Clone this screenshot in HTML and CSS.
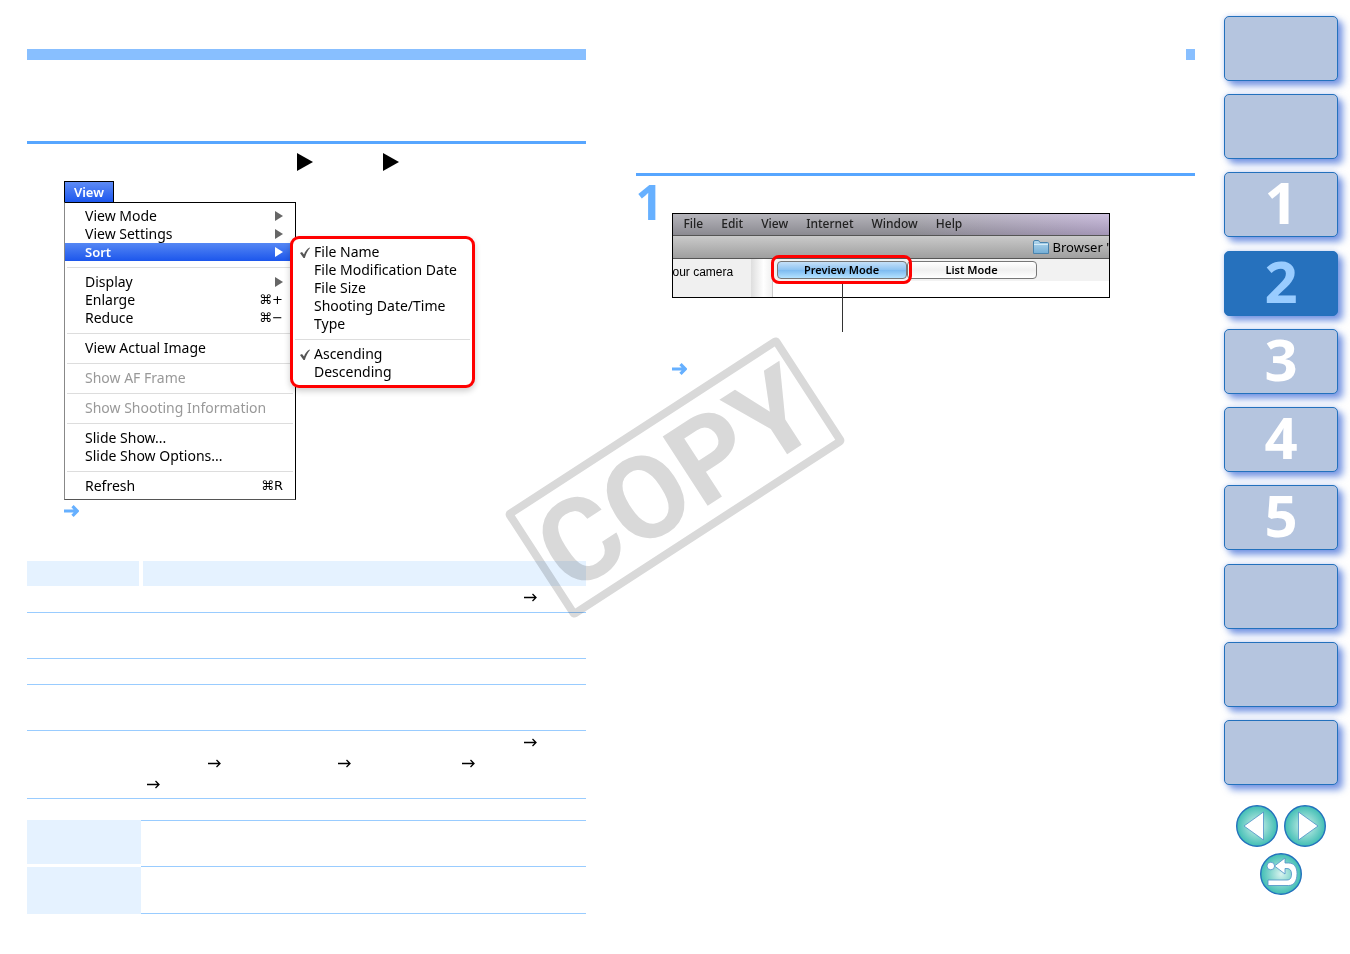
FILE: index.html
```
<!DOCTYPE html>
<html lang="en">
<head>
    <meta charset="UTF-8">
    <meta name="viewport" content="width=device-width, initial-scale=1.0">
    <title>Sorting Images</title>
    <link rel="stylesheet" href="styles.css">
</head>
<body>
    <!-- Shared shapes -->
    <svg class="defs" width="0" height="0" aria-hidden="true">
        <defs>
            <radialGradient id="teal" cx="50%" cy="50%" r="50%">
                <stop offset="0" stop-color="#d9f3ef"/>
                <stop offset="0.5" stop-color="#8ad8d0"/>
                <stop offset="1" stop-color="#3fbdb4"/>
            </radialGradient>
            <linearGradient id="folder" x1="0" y1="0" x2="0" y2="1">
                <stop offset="0" stop-color="#b4d8ee"/>
                <stop offset="1" stop-color="#74aed6"/>
            </linearGradient>
        </defs>
        <symbol id="ref" viewBox="0 0 13 9">
            <path d="M0 4.5H12M8.5 1L12 4.5L8.5 8" fill="none" stroke="#000" stroke-width="1.3"/>
        </symbol>
        <symbol id="note" viewBox="0 0 15 12">
            <path d="M0 6H13M8.5 1.2L13.2 6L8.5 10.8" fill="none" stroke="#66b0ff" stroke-width="3.2"/>
        </symbol>
        <symbol id="step" viewBox="0 0 16 18">
            <path d="M0 0L16 9L0 18Z"/>
        </symbol>
        <symbol id="sub" viewBox="0 0 8 10">
            <path d="M0 0L8 5L0 10Z" fill="currentColor"/>
        </symbol>
        <symbol id="check" viewBox="0 0 10 11">
            <path d="M0 6L2 5L4 7.5C5 4.5 7 2 9.5 0.5L10 1C7.5 4 6 7 4.8 11H3.5Z" fill="#555"/>
        </symbol>
    </svg>

    <div class="page">
        <main class="column">
            <div class="bar"></div>
            <div class="heading"></div>
            <div class="path">
                <svg><use href="#step"/></svg>
                <svg><use href="#step"/></svg>
            </div>

            <div class="menu-figure">
                <button type="button" class="menu-title">View</button>
                <ul class="menu">
                    <li><button type="button">View Mode <svg class="sub"><use href="#sub"/></svg></button></li>
                    <li><button type="button">View Settings <svg class="sub"><use href="#sub"/></svg></button></li>
                    <li class="open">
                        <button type="button">Sort <svg class="sub"><use href="#sub"/></svg></button>
                        <ul class="submenu">
                            <li><button type="button"><svg class="check"><use href="#check"/></svg>File Name</button></li>
                            <li><button type="button">File Modification Date</button></li>
                            <li><button type="button">File Size</button></li>
                            <li><button type="button">Shooting Date/Time</button></li>
                            <li><button type="button">Type</button></li>
                            <li class="separator"></li>
                            <li><button type="button"><svg class="check"><use href="#check"/></svg>Ascending</button></li>
                            <li><button type="button">Descending</button></li>
                        </ul>
                    </li>
                    <li class="separator"></li>
                    <li><button type="button">Display <svg class="sub"><use href="#sub"/></svg></button></li>
                    <li><button type="button">Enlarge <kbd>⌘+</kbd></button></li>
                    <li><button type="button">Reduce <kbd>⌘−</kbd></button></li>
                    <li class="separator"></li>
                    <li><button type="button">View Actual Image</button></li>
                    <li class="separator"></li>
                    <li><button type="button" disabled>Show AF Frame</button></li>
                    <li class="separator"></li>
                    <li><button type="button" disabled>Show Shooting Information</button></li>
                    <li class="separator"></li>
                    <li><button type="button">Slide Show...</button></li>
                    <li><button type="button">Slide Show Options...</button></li>
                    <li class="separator"></li>
                    <li><button type="button">Refresh <kbd>⌘R</kbd></button></li>
                </ul>
                <svg class="note"><use href="#note"/></svg>
            </div>

            <table class="items">
                <thead>
                    <tr><th></th><th></th></tr>
                </thead>
                <tbody>
                    <tr><td></td><td><div class="refs end"><svg><use href="#ref"/></svg></div></td></tr>
                    <tr class="tall"><td></td><td></td></tr>
                    <tr><td></td><td></td></tr>
                    <tr class="tall"><td></td><td></td></tr>
                    <tr>
                        <td></td>
                        <td>
                            <div class="refs end"><svg><use href="#ref"/></svg></div>
                            <div class="refs middle">
                                <svg><use href="#ref"/></svg>
                                <svg><use href="#ref"/></svg>
                                <svg><use href="#ref"/></svg>
                            </div>
                            <div class="refs"><svg><use href="#ref"/></svg></div>
                        </td>
                    </tr>
                </tbody>
            </table>

            <table class="order">
                <tbody>
                    <tr><th></th><td></td></tr>
                    <tr><th></th><td></td></tr>
                </tbody>
            </table>
        </main>

        <section class="column">
            <div class="bar short"></div>
            <div class="heading large"></div>
            <div class="procedure">
                <span class="number">1</span>
                <div class="step-body">
                    <div class="window">
                        <div class="menubar">
                            <span>File</span><span>Edit</span><span>View</span><span>Internet</span><span>Window</span><span>Help</span>
                        </div>
                        <div class="titlebar">
                            <svg viewBox="0 0 16 14" width="16" height="14">
                                <path d="M0.5 2Q0.5 0.5 2 0.5H5.5L7 2.5H14.5Q15.5 2.5 15.5 3.5V13.5H0.5Z" fill="url(#folder)" stroke="#4a83ad"/>
                                <path d="M1 4.5H15" stroke="#d6ebf7"/>
                            </svg>
                            <span>Browser '</span>
                        </div>
                        <div class="content">
                            <div class="camera">our camera</div>
                            <div class="scroll"></div>
                            <div class="viewer">
                                <div class="modes">
                                    <div class="mode-wrap marked"><button type="button" class="mode active">Preview Mode</button></div>
                                    <div class="mode-wrap"><button type="button" class="mode">List Mode</button></div>
                                </div>
                            </div>
                        </div>
                    </div>
                    <div class="callout"></div>
                    <svg class="note"><use href="#note"/></svg>
                </div>
            </div>
        </section>

        <nav class="side">
            <div class="tabs">
                <a href="#" aria-label="Introduction"></a>
                <a href="#" aria-label="Contents"></a>
                <a href="#">1</a>
                <a href="#" class="current">2</a>
                <a href="#">3</a>
                <a href="#">4</a>
                <a href="#">5</a>
                <a href="#" aria-label="Preferences"></a>
                <a href="#" aria-label="Reference"></a>
                <a href="#" aria-label="Index"></a>
            </div>
            <div class="pager">
                <a href="#" aria-label="Previous page">
                    <svg viewBox="0 0 42 42">
                        <circle cx="21" cy="21" r="20.3" fill="url(#teal)" stroke="#2371bd" stroke-width="1.4"/>
                        <path d="M8 21L27.5 7V35Z" fill="#fff" stroke="#4c8fc8" stroke-width="0.8"/>
                    </svg>
                </a>
                <a href="#" aria-label="Next page">
                    <svg viewBox="0 0 42 42">
                        <circle cx="21" cy="21" r="20.3" fill="url(#teal)" stroke="#2371bd" stroke-width="1.4"/>
                        <path d="M34 21L14.5 7V35Z" fill="#fff" stroke="#4c8fc8" stroke-width="0.8"/>
                    </svg>
                </a>
                <a href="#" aria-label="Back">
                    <svg viewBox="0 0 42 42">
                        <circle cx="21" cy="21" r="20.3" fill="url(#teal)" stroke="#2371bd" stroke-width="1.4"/>
                        <path d="M14.5 13L25 5V10H28.5C34 10 37 14 37 20.5C37 28 34 32.5 28.5 32.5H8V27H27C30.5 27 31.5 24.5 31.5 21C31.5 17.5 30 15.5 27 15.5H25V21Z" fill="#fff" stroke="#4c8fc8" stroke-width="0.8"/>
                        <circle cx="10.8" cy="13" r="3.8" fill="#fff" stroke="#4c8fc8" stroke-width="0.8"/>
                    </svg>
                </a>
            </div>
        </nav>

        <div class="watermark">COPY</div>
    </div>
</body>
</html>
```
FILE: styles.css
```
* {
    box-sizing: border-box;
}
body {
    margin: 0;
    background: #fff;
    color: #000;
    font-family: "Noto Sans", "Open Sans", sans-serif;
    font-size: 14px;
}
button {
    font: inherit;
    color: inherit;
    border: none;
    background: none;
    padding: 0;
    cursor: pointer;
}
ul {
    list-style: none;
    margin: 0;
    padding: 0;
}
svg {
    display: block;
    flex-shrink: 0;
}
.defs {
    position: absolute;
}
.page {
    position: relative;
    display: grid;
    grid-template-columns: 1fr 1fr 114px;
    padding: 0 12px 40px 27px;
    overflow: hidden;
}
.column {
    padding-top: 49px;
    margin-right: 29px;
    min-width: 0;
}
main.column {
    margin-right: 40px;
}
.column + .column {
    margin-left: 10px;
}
.bar {
    height: 11px;
    background: #88bfff;
}
.bar.short {
    width: 9px;
    margin-left: auto;
}
.heading {
    height: 84px;
    border-bottom: 3px solid #57a6ff;
}
.heading.large {
    height: 116px;
}
.path {
    display: flex;
    gap: 70px;
    padding: 9px 0 10px 270px;
}
.path svg {
    width: 16px;
    height: 18px;
}
.note {
    width: 15px;
    height: 12px;
}

/* Application menu */
.menu-figure {
    padding-left: 37px;
    margin-bottom: 44px;
}
.menu-figure .note {
    margin-top: 5px;
}
.menu-title {
    display: block;
    width: 50px;
    height: 21px;
    border: 1px solid #000;
    border-bottom: none;
    background: linear-gradient(#5e8bf5, #1c57ee);
    color: #fff;
    font-size: 13px;
    font-weight: 600;
}
.menu {
    width: 232px;
    padding: 4px 0;
    border: 1px solid #000;
    border-left-color: #888;
    border-bottom-color: #555;
}
.menu li {
    position: relative;
}
.menu button {
    display: flex;
    align-items: center;
    justify-content: space-between;
    width: 100%;
    height: 18px;
    padding: 0 12px 0 20px;
    line-height: 18px;
    text-align: left;
}
.menu button:disabled {
    color: #999;
}
.menu kbd {
    font-family: "DejaVu Sans", sans-serif;
    font-size: 13px;
}
.menu .separator {
    height: 12px;
    padding-top: 6px;
}
.menu .separator::after {
    content: "";
    display: block;
    height: 1px;
    margin: 0 2px;
    background: #ddd;
}
.sub {
    width: 8px;
    height: 10px;
    color: #666;
}
.menu .open > button {
    background: linear-gradient(#5587f4, #1c56ec);
    color: #fff;
    font-size: 13px;
    font-weight: 600;
}
.open > button .sub {
    color: #fff;
}
.submenu {
    position: absolute;
    top: -7px;
    left: 225px;
    z-index: 1;
    width: 185px;
    padding: 4px 0;
    background: #fff;
    border: 3px solid #f00;
    border-radius: 9px;
    box-shadow: 0 3px 6px rgba(0, 0, 0, 0.2);
}
.submenu button {
    position: relative;
    justify-content: flex-start;
    padding: 0 0 0 21px;
}
.check {
    position: absolute;
    left: 7px;
    top: 4px;
    width: 10px;
    height: 11px;
}

/* Tables */
table {
    width: 100%;
    border-spacing: 0;
    table-layout: fixed;
}
th, td {
    padding: 0;
    vertical-align: top;
}
.items {
    margin-bottom: 21px;
}
.items th {
    height: 25px;
    background: #e5f2ff;
}
.items th:first-child {
    width: 116px;
    border-right: 4px solid #fff;
}
.items td {
    height: 26px;
    border-bottom: 1px solid #99ccff;
}
.items tbody tr:first-child td {
    height: 27px;
}
.items .tall td {
    height: 46px;
}
.refs {
    display: grid;
    align-items: center;
    height: 21px;
    padding: 2px 0 0 4px;
}
.refs.end {
    padding-left: 381px;
}
.refs.middle {
    grid-template-columns: 130px 124px auto;
    padding-left: 65px;
}
.refs svg {
    width: 13px;
    height: 9px;
}
.items tr:last-child td {
    height: 68px;
}
.order th {
    width: 114px;
    background: #e5f2ff;
    background-clip: padding-box;
}
.order tr:first-child th {
    border-bottom: 3px solid #fff;
}
.order td {
    height: 47px;
    border-bottom: 1px solid #99ccff;
}
.order tr:first-child td {
    border-top: 1px solid #99ccff;
}

/* Step with window */
.procedure {
    display: grid;
    grid-template-columns: 36px 1fr;
}
.number {
    font-family: "Open Sans", sans-serif;
    font-size: 48px;
    font-weight: 700;
    line-height: 52px;
    color: #66b0ff;
}
.step-body {
    padding-top: 37px;
}
.window {
    max-width: 438px;
    border: 1px solid #000;
    overflow: hidden;
}
.menubar {
    display: flex;
    gap: 18px;
    height: 22px;
    padding-left: 11px;
    font-size: 12px;
    font-weight: 500;
    line-height: 20px;
    color: #222;
    background: linear-gradient(rgba(255, 255, 255, 0.2), rgba(0, 0, 0, 0.15)), linear-gradient(90deg, #a3a2aa 55%, #c0b0d6);
    border-bottom: 1px solid #555;
}
.titlebar {
    display: flex;
    align-items: center;
    gap: 4px;
    height: 23px;
    padding-left: 360px;
    font-size: 13px;
    white-space: nowrap;
    background: linear-gradient(#cacaca, #9f9f9f);
    border-bottom: 1px solid #555;
}
.content {
    display: flex;
    height: 38px;
}
.camera {
    width: 78px;
    background: #f0f0f0;
    font-family: "Liberation Sans", sans-serif;
    font-size: 12px;
    line-height: 26px;
    white-space: nowrap;
}
.scroll {
    width: 22px;
    background: linear-gradient(90deg, #dedede, #fff 60%, #f0f0f0);
    border-right: 1px solid #ccc;
}
.viewer {
    flex: 1;
}
.modes {
    display: flex;
    height: 22px;
    background: #f2f2f2;
}
.mode-wrap {
    position: relative;
    padding: 2px 0 0 4px;
}
.mode-wrap + .mode-wrap {
    padding-left: 0;
}
.mode {
    display: block;
    width: 130px;
    height: 18px;
    border: 1px solid #777;
    border-radius: 4px;
    background: linear-gradient(#fff, #f0f0f0 50%, #fff);
    font-size: 11px;
    font-weight: 600;
    line-height: 16px;
}
.mode.active {
    background: linear-gradient(#c5e0f8, #8dc3f2 50%, #7cbaf0 51%, #b4e2ff);
}
/* Red frame round the marked button */
.marked::after {
    content: "";
    position: absolute;
    inset: -4px -5px -3px -2px;
    border: 3px solid #f00;
    border-radius: 8px;
    z-index: 1;
}
.callout {
    position: relative;
    height: 34px;
    margin-bottom: 31px;
}
.callout::before {
    content: "";
    position: absolute;
    left: 170px;
    top: -14px;
    bottom: 0;
    width: 1px;
    background: #333;
}

/* Chapter navigation */
.side {
    padding-top: 16px;
}
.tabs {
    display: flex;
    flex-direction: column;
    justify-content: space-between;
    height: 769px;
}
.tabs a {
    height: 65px;
    border: 1px solid #2371bd;
    border-radius: 5px;
    background: #b5c5df;
    box-shadow: 5px 5px 7px rgba(40, 90, 210, 0.6), 0 0 5px rgba(80, 120, 220, 0.3);
    color: #fff;
    font-family: "Open Sans", sans-serif;
    font-size: 58px;
    font-weight: 700;
    line-height: 58px;
    text-align: center;
    text-decoration: none;
}
.tabs .current {
    background: #2671bd;
    color: #99ccff;
}
.pager {
    display: flex;
    flex-wrap: wrap;
    justify-content: center;
    gap: 6px;
    padding-top: 20px;
}
.pager svg {
    width: 42px;
    height: 42px;
}

/* Watermark */
.watermark {
    position: absolute;
    top: 414px;
    left: 50%;
    width: 326px;
    height: 127px;
    border: 8px solid #d9d9d9;
    border-radius: 5px;
    color: #d9d9d9;
    font-family: Roboto, sans-serif;
    font-size: 116px;
    font-weight: 700;
    line-height: 114px;
    text-align: center;
    transform: translateX(-50%) rotate(-33deg);
    mix-blend-mode: multiply;
    pointer-events: none;
}
```
